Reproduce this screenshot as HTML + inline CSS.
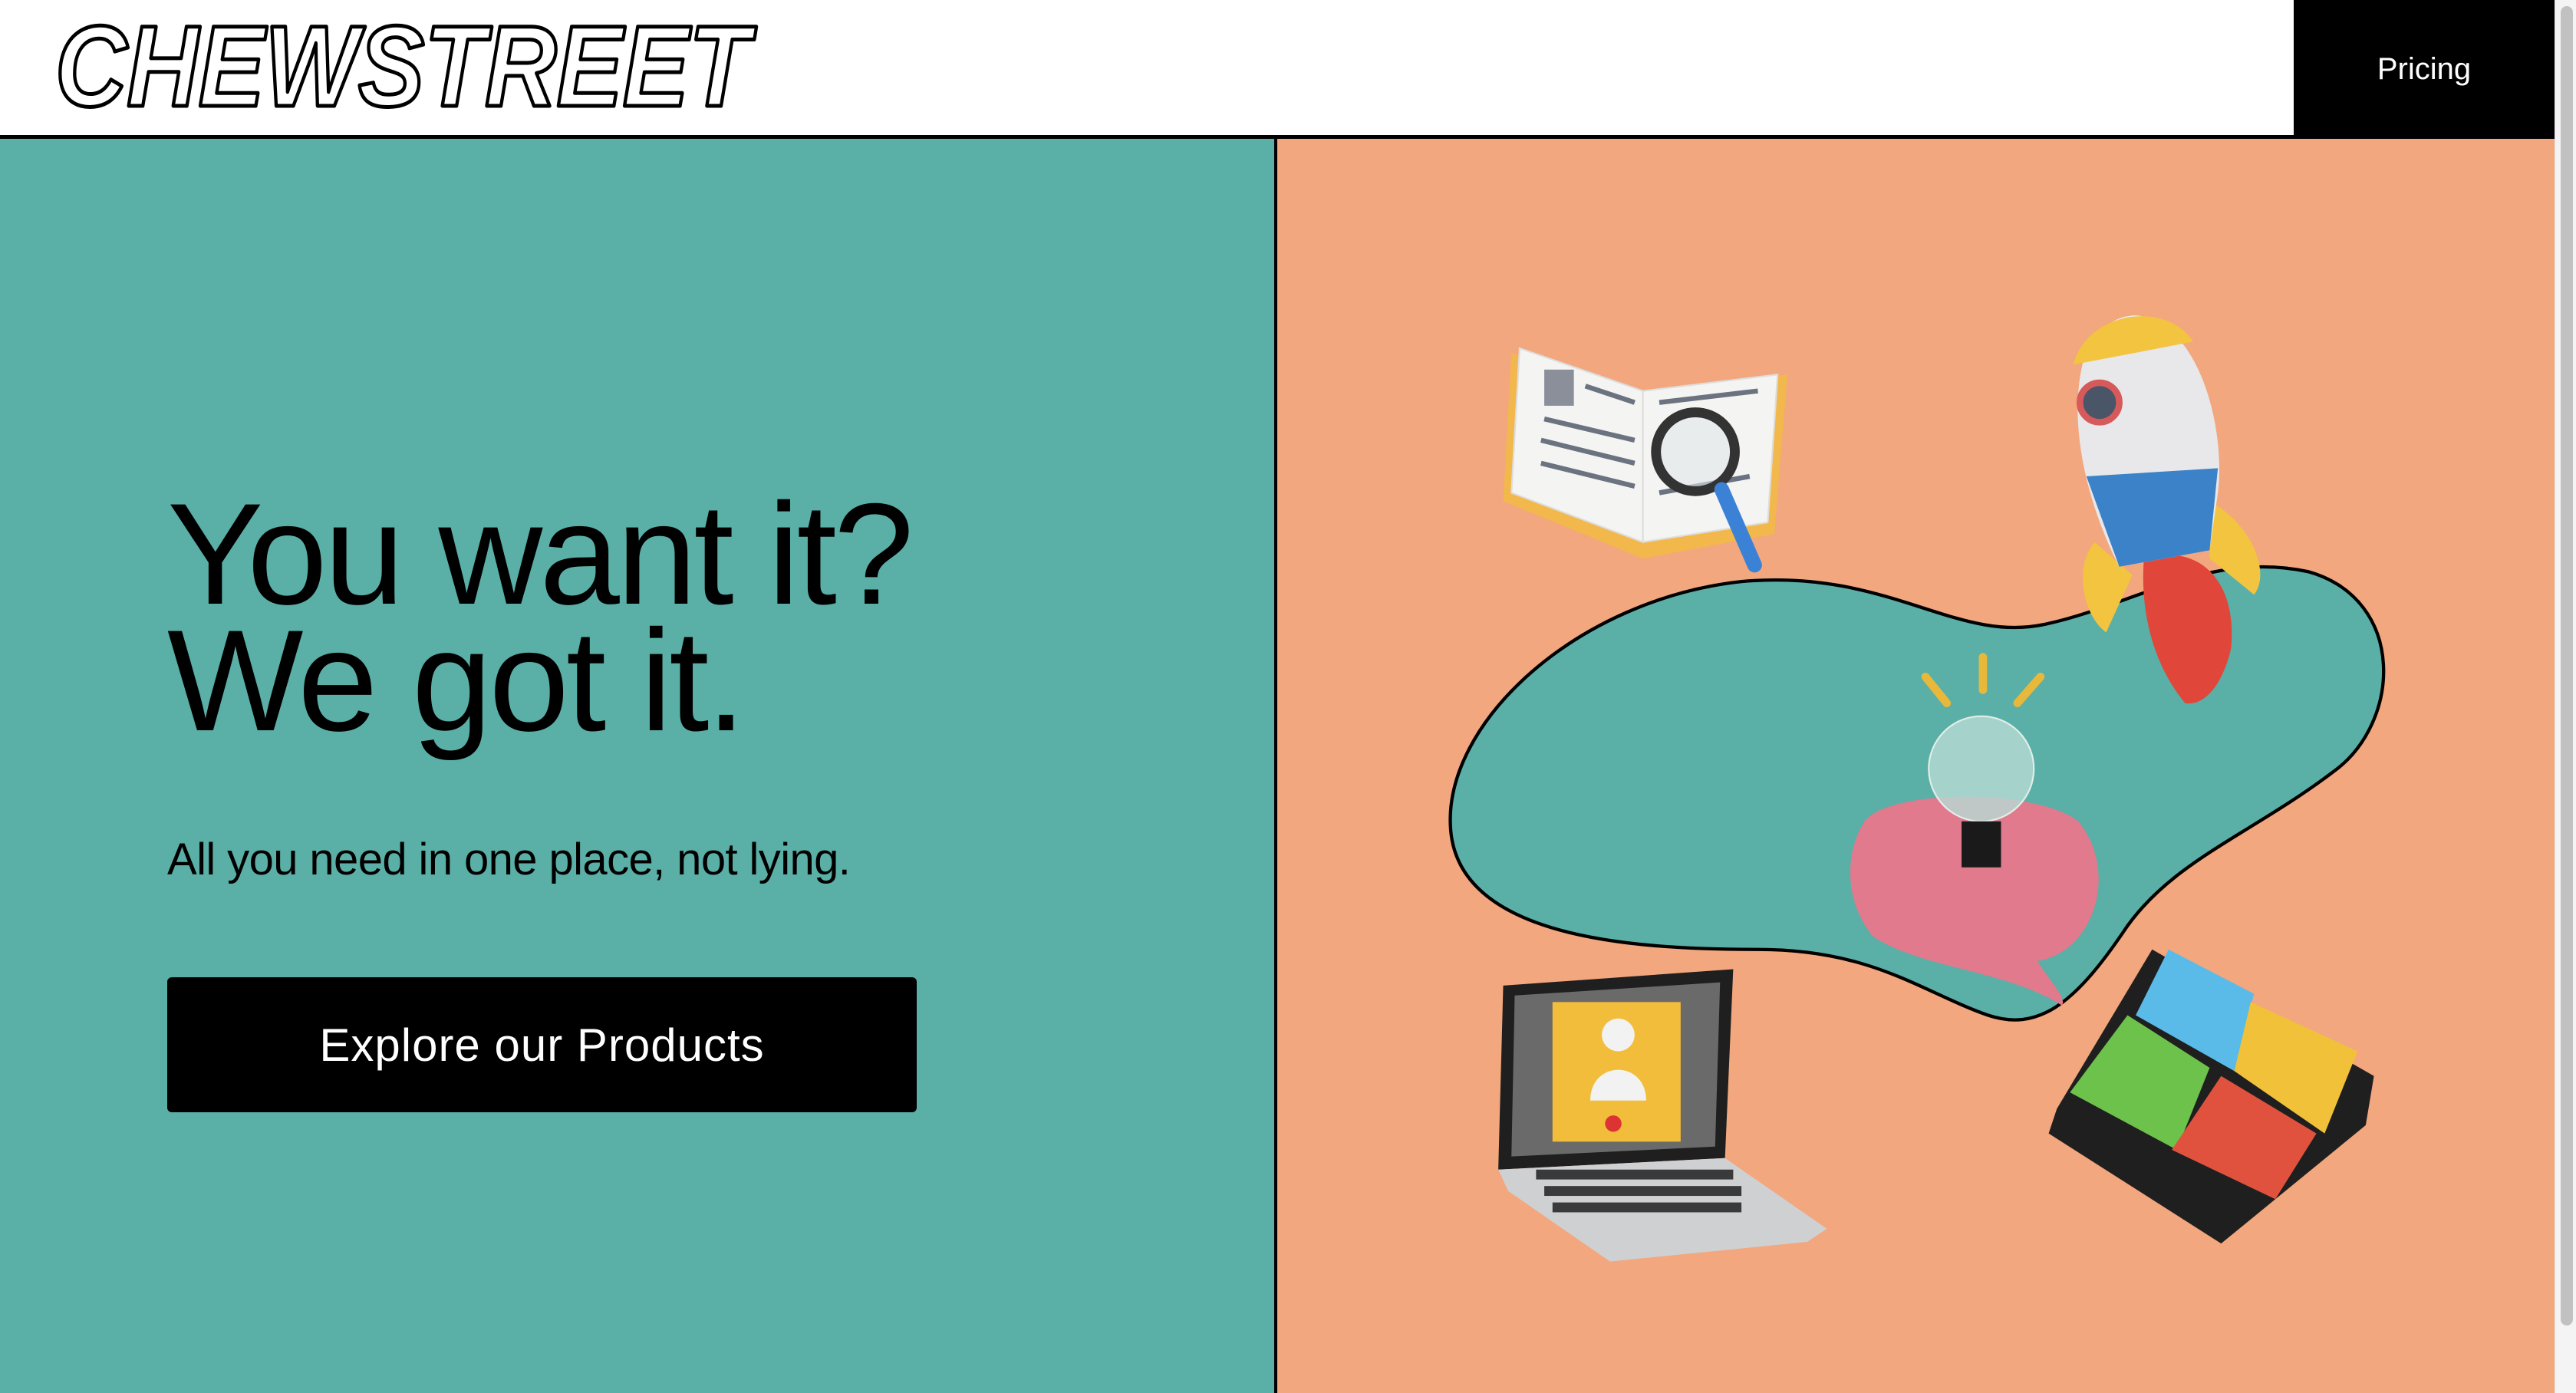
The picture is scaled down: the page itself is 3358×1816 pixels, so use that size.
<!DOCTYPE html>
<html><head><meta charset="utf-8"><style>
html,body{margin:0;padding:0}
body{width:3358px;height:1816px;position:relative;overflow:hidden;background:#fff;font-family:"Liberation Sans",sans-serif}
.hdr{position:absolute;left:0;top:0;width:3330px;height:176px;background:#fff;border-bottom:5px solid #000}
.pricing{position:absolute;left:2990px;top:0;width:340px;height:181px;background:#000;color:#fff;font-size:40px;display:flex;align-items:center;justify-content:center}
.left{position:absolute;left:0;top:181px;width:1661px;height:1635px;background:#5aafa7;border-right:4px solid #000}
.right{position:absolute;left:1665px;top:181px;width:1665px;height:1635px;background:#f2a77e}
h1{position:absolute;left:218px;top:640px;margin:0;font-size:188px;line-height:165px;font-weight:400;letter-spacing:-4px;color:#000}
.sub{position:absolute;left:218px;top:1087px;font-size:58px;color:#000;letter-spacing:-0.6px}
.btn{position:absolute;left:218px;top:1274px;width:977px;height:176px;background:#000;color:#fff;border-radius:6px;font-size:60px;letter-spacing:1px;display:flex;align-items:center;justify-content:center}
.sb{position:absolute;left:3330px;top:0;width:28px;height:1816px;background:#f4f4f4;border-left:1px solid #e6e6e6}
.th{position:absolute;left:7px;top:8px;width:16px;height:1720px;background:#c1c1c1;border-radius:8px}
svg.o{position:absolute;left:0;top:0}
</style></head><body>
<div class="hdr"></div>
<svg class="o" width="1100" height="176" viewBox="0 0 1100 176"><text x="72" y="138" font-family="Liberation Sans,sans-serif" font-weight="bold" font-style="italic" font-size="150" textLength="905" lengthAdjust="spacingAndGlyphs" fill="#fff" stroke="#000" stroke-width="5" stroke-linejoin="round">CHEWSTREET</text></svg>
<div class="pricing">Pricing</div>
<div class="left"></div>
<div class="right"></div>
<h1>You want it?<br>We got it.</h1>
<div class="sub">All you need in one place, not lying.</div>
<div class="btn">Explore our Products</div>
<svg class="o" width="3358" height="1816" viewBox="0 0 1568 848" preserveAspectRatio="none">
<path d="M883,505 C878,440 960,365 1060,354 C1150,346 1190,392 1245,380 C1300,368 1345,335 1405,348 C1465,365 1462,440 1420,470 C1370,508 1320,525 1292,568 C1262,612 1240,628 1210,618 C1170,604 1140,578 1070,578 C990,578 888,570 883,505 Z" fill="#5aafa7" stroke="#000" stroke-width="2"/>
<!-- book -->
<path d="M920,215 L1000,240 L1088,228 L1080,325 L1000,340 L915,305 Z" fill="#f2b84b"/>
<path d="M925,212 L1000,238 L1000,330 L920,300 Z" fill="#f4f4f2" stroke="#ddd"/>
<path d="M1000,238 L1082,228 L1076,318 L1000,330 Z" fill="#f4f4f2" stroke="#ddd"/>
<rect x="940" y="225" width="18" height="22" fill="#8a8f9a"/>
<g stroke="#6b7280" stroke-width="3"><line x1="965" y1="235" x2="995" y2="245"/><line x1="940" y1="255" x2="995" y2="268"/><line x1="938" y1="268" x2="995" y2="282"/><line x1="938" y1="282" x2="995" y2="296"/><line x1="1010" y1="245" x2="1070" y2="238"/><line x1="1010" y1="300" x2="1065" y2="290"/></g>
<circle cx="1032" cy="275" r="24" fill="#dfe6e9" fill-opacity=".6" stroke="#333" stroke-width="6"/>
<line x1="1048" y1="298" x2="1068" y2="344" stroke="#3b82d6" stroke-width="9" stroke-linecap="round"/>
<!-- rocket -->
<path d="M1275,330 C1262,345 1268,375 1282,385 L1298,350Z" fill="#f2c440"/>
<path d="M1345,305 C1372,320 1382,350 1372,362 L1345,340Z" fill="#f2c440"/>
<path d="M1305,340 C1340,330 1362,355 1358,395 C1352,420 1340,430 1330,428 C1315,410 1302,380 1305,340Z" fill="#e0473a"/>
<path d="M1300,192 C1338,195 1355,260 1350,300 L1345,335 L1290,345 C1272,310 1258,260 1268,220 C1275,200 1288,192 1300,192Z" fill="#e8e8ea"/>
<path d="M1262,222 C1270,190 1318,182 1335,208 Z" fill="#f2c440"/>
<path d="M1270,290 L1350,285 L1345,335 L1290,345 Z" fill="#3b82c8"/>
<circle cx="1278" cy="245" r="12" fill="#4a5568" stroke="#d65a5a" stroke-width="4"/>
<!-- bulb brain -->
<g stroke="#e8b83a" stroke-width="5" stroke-linecap="round"><line x1="1172" y1="412" x2="1185" y2="428"/><line x1="1207" y1="400" x2="1207" y2="420"/><line x1="1242" y1="412" x2="1228" y2="428"/></g>
<path d="M1135,500 C1150,480 1240,480 1265,500 C1290,530 1275,580 1240,585 C1250,600 1258,608 1255,612 C1220,590 1170,590 1140,570 C1120,545 1125,515 1135,500Z" fill="#e17a8c"/>
<circle cx="1206" cy="468" r="32" fill="#b8dcd6" fill-opacity=".8" stroke="#e0eee9"/>
<rect x="1194" y="500" width="24" height="28" fill="#1a1a1a"/>
<!-- laptop -->
<path d="M915,600 L1055,590 L1050,705 L912,712 Z" fill="#1f1f1f"/>
<path d="M922,606 L1047,598 L1044,698 L920,704 Z" fill="#6a6a6a"/>
<rect x="945" y="610" width="78" height="85" fill="#f2bd3a"/>
<circle cx="985" cy="630" r="10" fill="#f2f2f2"/><path d="M968,670 C968,645 1002,645 1002,670Z" fill="#f2f2f2"/>
<circle cx="982" cy="684" r="5" fill="#d33"/>
<path d="M912,712 L1050,705 L1112,748 L1100,756 L980,768 L918,725Z" fill="#cfd0d2"/>
<g fill="#3a3a3a"><rect x="935" y="712" width="120" height="6"/><rect x="940" y="722" width="120" height="6"/><rect x="945" y="732" width="115" height="6"/></g>
<!-- calculator -->
<path d="M1310,578 L1445,655 L1440,685 L1352,757 L1247,690 L1252,675 Z" fill="#1f1f1f"/>
<path d="M1320,578 L1372,605 L1360,652 L1300,618 Z" fill="#5bbbe8"/>
<path d="M1370,610 L1435,640 L1415,690 L1360,652 Z" fill="#f2c13a"/>
<path d="M1295,618 L1345,650 L1325,700 L1260,665 Z" fill="#6cc24a"/>
<path d="M1352,655 L1410,690 L1385,730 L1322,700 Z" fill="#e0523d"/>
</svg>
<div class="sb"><div class="th"></div></div>
</body></html>
